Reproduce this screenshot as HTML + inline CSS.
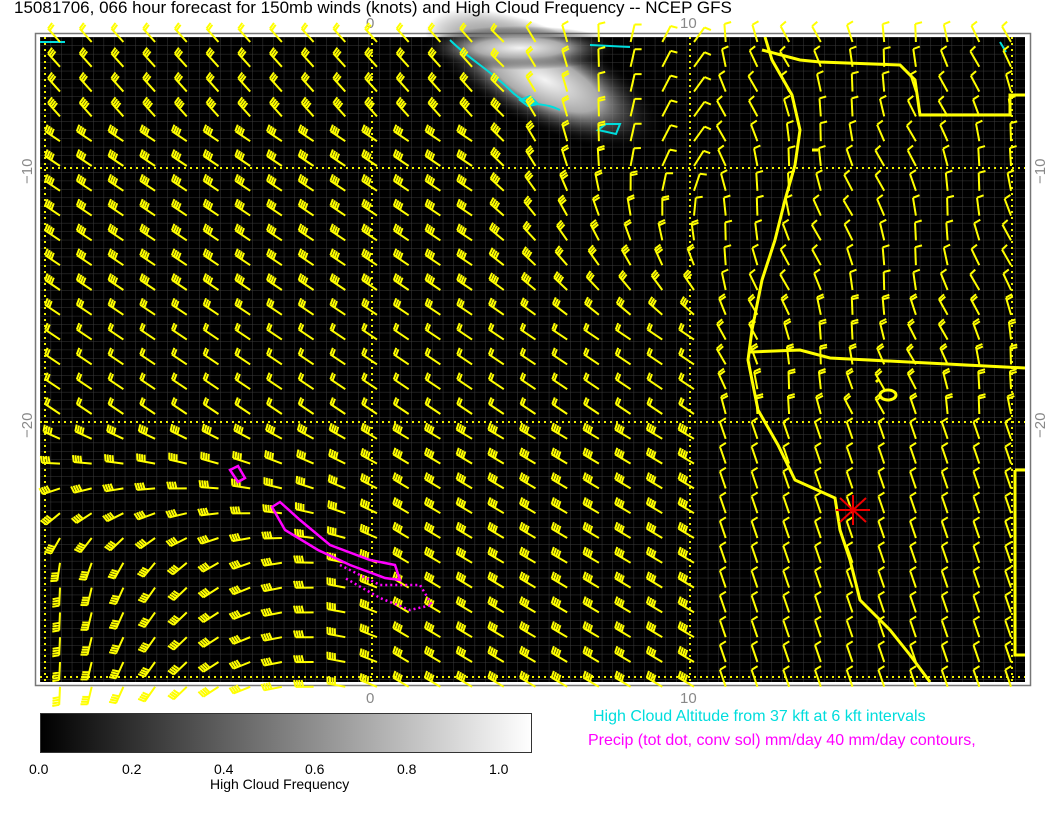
<!DOCTYPE html>
<html><head><meta charset="utf-8"><style>
body{margin:0;background:#fff;width:1056px;height:816px;overflow:hidden;font-family:"Liberation Sans",sans-serif}
</style></head><body>
<svg id="s" width="1056" height="816" xmlns="http://www.w3.org/2000/svg" style="position:absolute;left:0;top:0">
<defs>
<pattern id="g" width="10.6" height="8.45" patternUnits="userSpaceOnUse" x="40" y="37">
<path d="M0 0H10.6M0 0V8.45" stroke="#3a3a3a" stroke-width="1" fill="none"/></pattern>
<linearGradient id="cb" x1="0" x2="1"><stop offset="0" stop-color="#000"/><stop offset="1" stop-color="#fff"/></linearGradient>
<radialGradient id="cl" cx="0.5" cy="0.5" r="0.5"><stop offset="0" stop-color="#f4f4f4"/><stop offset="0.45" stop-color="#aaa"/><stop offset="1" stop-color="#000" stop-opacity="0"/></radialGradient>
</defs>
<text x="14" y="13" font-size="17" fill="#000">15081706, 066 hour forecast for 150mb winds (knots) and High Cloud Frequency -- NCEP GFS</text>
<rect x="35.5" y="33.5" width="995" height="652" fill="#fff" stroke="#777" stroke-width="1.5"/>
<rect x="40" y="37" width="985" height="645" fill="#000"/>
<rect x="40" y="37" width="985" height="645" fill="url(#g)"/>
<ellipse cx="545" cy="80" rx="130" ry="50" fill="url(#cl)" transform="rotate(25 545 80)"/>
<ellipse cx="520" cy="48" rx="100" ry="22" fill="url(#cl)"/>
<g stroke="#ee0" stroke-width="2" stroke-dasharray="2 4" fill="none">
<path d="M40 168H1025M40 422H1025M40 677H1025M372 37V682M690 37V682M1012 37V682M45 37V682"/></g>
<g fill="#888" font-size="15">
<text x="366" y="28">0</text><text x="680" y="28">10</text>
<text x="366" y="703">0</text><text x="680" y="703">10</text>
<text transform="translate(32 184) rotate(-90)">−10</text><text transform="translate(32 438) rotate(-90)">−20</text>
<text transform="translate(1045 184) rotate(-90)">−10</text><text transform="translate(1045 438) rotate(-90)">−20</text>
</g>
<g stroke="#0dd" stroke-width="2" fill="none">
<path d="M450 40C470 60 490 70 510 90S540 100 560 110M520 100l10 -4l8 8l-10 2zM598 130l8 -6h14l-4 10zM590 45l40 2M40 42h25M1000 42l6 10"/></g>
<g id="b" stroke="#ff0" stroke-width="2" fill="none"></g>
<g stroke="#ff0" stroke-width="3" fill="none">
<path d="M765 37L772 60L792 95L800 130L795 165L785 200L775 240L762 280L752 330L748 360L758 410L778 445L795 480L835 498L840 530L850 560L860 600L890 630L910 655L930 682"/>
<path d="M762 50L800 60L820 62L900 65L915 80L920 115L1010 115L1010 95L1025 95M750 352L800 350L830 358L1025 368M1015 470H1025M1015 470V655H1025M812 150l6 0"/>
<path d="M880 395a8 5 0 1 0 16 0a8 5 0 1 0 -16 0M876 380l2 2"/>
</g>
<g stroke="#f0f" stroke-width="2.5" fill="none">
<path d="M272 507L280 502L300 520L330 545L370 560L395 565L400 580L385 578L350 565L318 550L285 530ZM230 470L238 466L245 478L238 482Z"/>
<path d="M340 565L380 585L420 585L432 605L410 610L380 598L345 578" stroke-dasharray="2 3"/>
</g>
<g stroke="#e00" stroke-width="2"><path d="M840 498L866 522M866 498L840 522M853 495V525M836 510H870"/></g>
<rect x="40.5" y="713.5" width="491" height="39" fill="url(#cb)" stroke="#333"/>
<g font-size="14" fill="#000">
<text x="29" y="774">0.0</text><text x="122" y="774">0.2</text><text x="214" y="774">0.4</text><text x="305" y="774">0.6</text><text x="397" y="774">0.8</text><text x="489" y="774">1.0</text>
<text x="210" y="789">High Cloud Frequency</text></g>
<text x="593" y="721" font-size="16" fill="#0dd">High Cloud Altitude from 37 kft at 6 kft intervals</text>
<text x="588" y="745" font-size="16" fill="#f0f">Precip (tot dot, conv sol) mm/day 40 mm/day contours,</text>
</svg>
<script>
var g=document.getElementById('b'),d='';
function cl(v,a,b){return Math.max(a,Math.min(b,v));}
for(var r=0;r<27;r++){for(var c=0;c<31;c++){
var x=60+c*31.7,y=42+r*24.8;
var a,sp;
if(y<430){
 a=-2.55; sp=Math.round(2+2.5*Math.sin(cl((y-30)/330,0,1)*Math.PI));
 if(y<140){a=-2.3;}
 var t=cl((x-480)/200,0,1),u=cl((330-y)/170,0,1);
 if(x>480&&x<=700){a=-2.55+t*u*1.6; sp=Math.max(1,Math.round(sp*(1-t*u)));}
 if(x>700){a=-1.85+0.25*Math.sin(r*0.7+c); sp=y<300?1:2;}
}else{
 var al=3.68-cl((y-430)/140,0,1)*2.1;
 a=al+(3.68-al)*cl((x-54)/350,0,1);
 sp=x<700?4:1;
 if(x>700)a=-1.9;
}
sp=cl(sp,1,5);
var L=18,ex=x+L*Math.cos(a),ey=y+L*Math.sin(a);
d+='M'+x.toFixed(1)+' '+y.toFixed(1)+'L'+ex.toFixed(1)+' '+ey.toFixed(1);
var ba=a+1.35,bl=7;
for(var k=0;k<sp;k++){var tt=1-k*0.14,px=x+L*tt*Math.cos(a),py=y+L*tt*Math.sin(a);
d+='M'+px.toFixed(1)+' '+py.toFixed(1)+'l'+(bl*Math.cos(ba)).toFixed(1)+' '+(bl*Math.sin(ba)).toFixed(1);}
}}
var p=document.createElementNS('http://www.w3.org/2000/svg','path');p.setAttribute('d',d);g.appendChild(p);
</script>
</body></html>
